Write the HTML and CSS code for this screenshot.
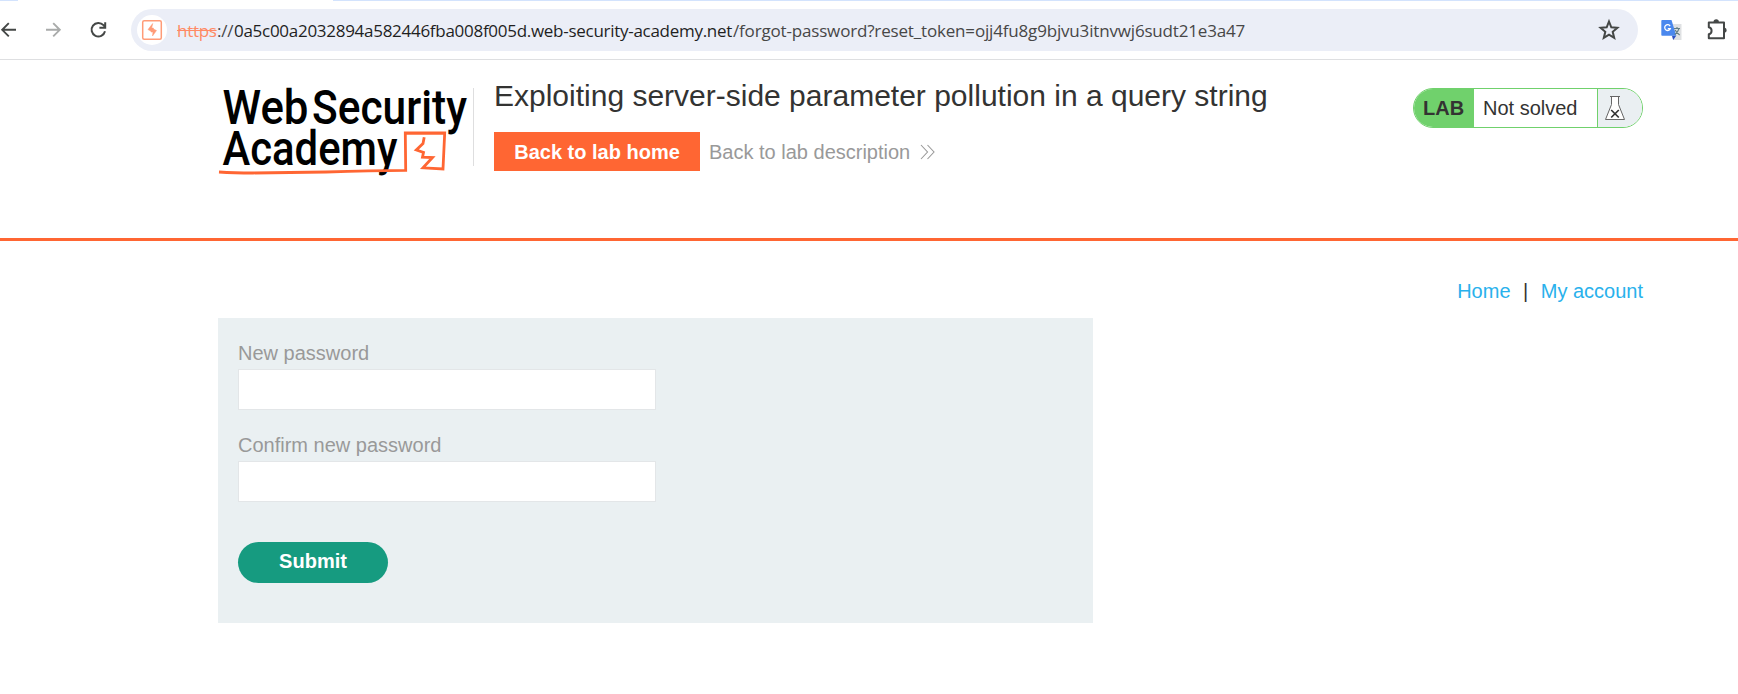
FILE: index.html
```
<!DOCTYPE html>
<html lang="en">
<head>
<meta charset="utf-8">
<title>Exploiting server-side parameter pollution in a query string</title>
<link rel="stylesheet" href="styles.css">
</head>
<body>
<div class="browser">
  <div class="tabstrip"></div>
  <div class="toolbar">
    <svg class="nav-icons" width="131" height="42" viewBox="0 0 131 42" fill="none" stroke-width="1.9">
      <path d="M16 20.8H2.5M8.8 14.2L2.2 20.8L8.8 27.4" stroke="#444746"/>
      <path d="M46 20.8H59.5M53.2 14.2L59.8 20.8L53.2 27.4" stroke="#a9abaa"/>
      <path d="M105 22.3A6.8 6.8 0 1 1 103.5 16.2L105 17.8M105.2 13.2V18.8H99.4" stroke="#444746" stroke-width="2"/>
    </svg>
    <div class="address">
      <svg class="site-icon" width="30" height="30" viewBox="0 0 30 30">
        <circle cx="15" cy="15" r="15" fill="#fff"/>
        <rect x="5.7" y="5.7" width="18.6" height="18.6" rx="1.5" fill="none" stroke="#ff9b77" stroke-width="1.5"/>
        <path d="M15.7 8.5L11 14.6L14 16.2V17H16L15.5 21L19.5 15.5L16.4 14V13H14.7Z" fill="#ff9b77" stroke="#ff9b77" stroke-width=".5"/>
      </svg>
      <div class="url"><span class="scheme">https</span><span class="sep">://</span><span class="host">0a5c00a2032894a582446fba008f005d.web-security-academy.net</span><span class="path">/forgot-password?reset_token=ojj4fu8g9bjvu3itnvwj6sudt21e3a47</span></div>
      <svg class="star" width="22" height="22" viewBox="0 0 22 22"><path d="M11 2.5L13.3 8.3L19.4 8.8L14.7 12.8L16.2 18.9L11 15.6L5.8 18.9L7.3 12.8L2.6 8.8L8.7 8.3Z" fill="none" stroke="#444746" stroke-width="2"/></svg>
    </div>
    <svg class="translate" width="22" height="22" viewBox="0 0 22 22">
      <path d="M7 5H20.5V21H12Z" fill="#dfe1e3"/>
      <path d="M11 16.8H15.2L12.2 21Z" fill="#2a4fc4"/>
      <path d="M1.2 1H10.5L15.3 16.8H1.2Q.3 16.8 .3 16V1.9Q.3 1 1.2 1Z" fill="#4a88ee"/>
      <path d="M9.1 7.1A2.9 2.9 0 1 0 9.3 9.7H6.8" fill="none" stroke="#fff" stroke-width="1.3"/>
      <path d="M13 9.5H19M16 8V9.5M18 9.5Q17 13.5 13.7 15.5M14.2 11Q15.5 14 18.7 16" fill="none" stroke="#607d82" stroke-width="1.1"/>
    </svg>
    <svg class="puzzle" width="22" height="22" viewBox="0 0 22 22">
      <path d="M2.8 3.5H18V19.3H2.8V15.2C6.5 14.5 6.5 9 2.8 8.3Z" fill="none" stroke="#444746" stroke-width="2" stroke-linejoin="round"/>
      <path d="M7.5 3A2.7 2.7 0 0 1 12.9 3ZM18.5 8.5A2.7 2.7 0 0 1 18.5 13.8Z" fill="#444746"/>
    </svg>
  </div>
</div>
<header class="lab-header">
  <div class="container header-row">
    <svg class="logo" width="256" height="98" viewBox="0 0 256 98">
      <g class="logo-text">
        <text x="4.5" y="45" textLength="86" lengthAdjust="spacingAndGlyphs">Web</text>
        <text x="94" y="45" textLength="155" lengthAdjust="spacingAndGlyphs">Security</text>
        <text x="4.5" y="85.5" textLength="175" lengthAdjust="spacingAndGlyphs">Academy</text>
      </g>
      <path d="M1 93Q16 94 35 94L108 93Q153 91.7 187.7 91.3L187.3 54L226.7 54L225 90L205 88.8L214.5 78.5L204.5 78.2L205.5 73.5L198.3 71L205 64.5L206.2 58.3" fill="none" stroke="#ff6633" stroke-width="2.8"/>
      <path d="M186 53.3H227.5V55.6H186Z" fill="#ff6633"/>
    </svg>
    <div class="title-block">
      <h2>Exploiting server-side parameter pollution in a query string</h2>
      <div class="actions">
        <a class="lab-home">Back to lab home</a>
        <a class="lab-description">Back to lab description
          <svg width="16" height="16" viewBox="0 0 16 16" fill="none" stroke="#999" stroke-width="1.1"><path d="M1 1L7.5 8L1 15M7.5 1L14 8L7.5 15"/></svg>
        </a>
      </div>
    </div>
    <div class="status">
      <span class="status-tag">LAB</span>
      <span class="status-text">Not solved</span>
      <span class="status-flask">
        <svg width="22" height="26" viewBox="0 0 22 26" fill="none" stroke="#666">
          <path d="M7.5 1.5V9.5L1.5 24.5H20.5L14.5 9.5V1.5Z" fill="#fff"/>
          <path d="M6 1.5H16"/>
          <path d="M7.2 15L14.8 22.5M14.8 15L7.2 22.5" stroke="#333" stroke-width="1.7"/>
        </svg>
      </span>
    </div>
  </div>
</header>
<main class="container">
  <nav class="top-links"><a>Home</a><span>|</span><a>My account</a></nav>
  <form class="panel">
    <label for="new">New password</label>
    <input id="new" type="password">
    <label for="confirm">Confirm new password</label>
    <input id="confirm" type="password">
    <button type="button">Submit</button>
  </form>
</main>
</body>
</html>
```
FILE: styles.css
```
* { box-sizing: border-box; }
body {
  margin: 0;
  background: #fff;
  color: #333332;
  font: 20px/24px "Liberation Sans", Arial, sans-serif;
  overflow: hidden;
}
svg { display: block; flex: none; overflow: visible; }
.browser { height: 60px; border-bottom: 1px solid #dedfe1; }
.tabstrip {
  height: 1px;
  background: linear-gradient(90deg, #d3e3fd 18px, #fff 18px, #fff 333px, #d3e3fd 333px);
}
.toolbar { display: flex; align-items: center; padding-top: 8px; }
.address {
  display: flex;
  align-items: center;
  width: 1507px;
  height: 42px;
  padding: 0 18px 0 6px;
  border-radius: 21px;
  background: #ebeef7;
}
.url {
  flex: 1;
  display: flex;
  margin-left: 10px;
  padding-top: 1px;
  font: 17px/24px "Open Sans", "Noto Sans", sans-serif;
  white-space: nowrap;
  color: #1f1f1f;
}
.scheme { width: 40px; color: #ff8a65; text-decoration: line-through; letter-spacing: -.3px; }
.sep { width: 17px; color: #474747; letter-spacing: -.2px; }
.host { width: 499px; letter-spacing: -.28px; }
.path { color: #474747; letter-spacing: -.17px; }
.translate { margin-left: 23px; }
.puzzle { margin-left: 23px; }
.container { width: 1425px; margin-left: 218px; }
.lab-header { height: 181px; border-bottom: 3px solid #ff6633; }
.header-row { display: flex; align-items: flex-start; padding-top: 19px; }
.logo-text { font: 500 49px Roboto, sans-serif; fill: #000; }
.title-block { margin-left: 0; padding-left: 20px; position: relative; }
.title-block::before {
  content: "";
  position: absolute;
  left: -1px;
  top: 9px;
  width: 1px;
  height: 78px;
  background: #dededf;
}
h2 { margin: 0; font-size: 30px; font-weight: 400; line-height: 34px; white-space: nowrap; }
.actions { display: flex; align-items: center; margin-top: 19px; }
.lab-home {
  width: 206px;
  height: 39px;
  background: #ff6633;
  color: #fff;
  font-weight: 700;
  line-height: 40px;
  text-align: center;
}
.lab-description { display: flex; align-items: center; gap: 10px; margin-left: 9px; color: #999; white-space: nowrap; }
.status {
  display: flex;
  width: 230px;
  height: 40px;
  margin: 9px 0 0 auto;
  border: 1px solid #70d16c;
  border-radius: 20px;
  overflow: hidden;
  line-height: 38px;
}
.status-tag { width: 60px; padding-left: 9px; background: #70d16c; font-weight: 700; }
.status-text { width: 123px; padding-left: 9px; }
.status-flask { flex: 1; padding: 6px 0 0 6px; border-left: 1px solid #70d16c; background: #eaeff2; }
.top-links { display: flex; justify-content: flex-end; gap: 12.5px; padding-top: 38px; }
.top-links a { color: #29b1ec; }
.panel { width: 875px; height: 305px; margin-top: 15px; padding: 23px 20px; background: #eaf0f2; color: #999; }
.panel label { display: block; }
.panel input {
  display: block;
  width: 418px;
  height: 41px;
  margin: 4px 0 23px;
  border: 1px solid #e3e6e8;
  background: #fff;
}
.panel button {
  display: block;
  width: 150px;
  height: 41px;
  margin-top: 40px;
  padding: 0 0 2px;
  border: 0;
  border-radius: 21px;
  background: #169b80;
  color: #fff;
  font: 700 20px/39px "Liberation Sans", Arial, sans-serif;
}
```
